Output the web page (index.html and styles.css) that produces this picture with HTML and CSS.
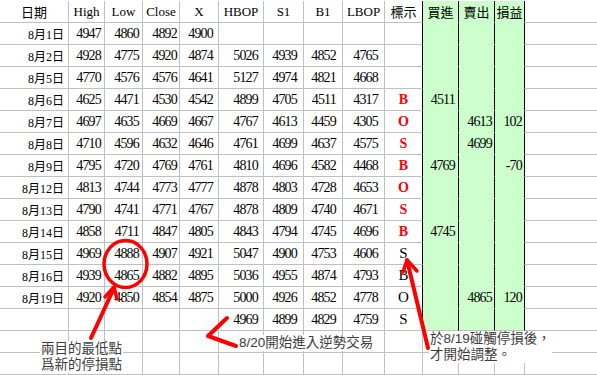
FILE: index.html
```html
<!DOCTYPE html>
<html lang="zh-Hant">
<head>
<meta charset="utf-8">
<title>停損表</title>
<link rel="stylesheet" href="styles.css">
</head>
<body>
<div class="sheet">
  <div class="row head">
    <div class="hd">日期</div><div>High</div><div>Low</div><div>Close</div><div>X</div><div>HBOP</div><div>S1</div><div>B1</div><div>LBOP</div><div class="mk">標示</div><div class="g">買進</div><div class="g">賣出</div><div class="g">損益</div><div></div>
  </div>
  <div class="row">
    <div class="d">8月1日</div><div>4947</div><div>4860</div><div>4892</div><div>4900</div><div></div><div></div><div></div><div></div><div class="mk"></div><div class="g"></div><div class="g"></div><div class="g"></div><div></div>
  </div>
  <div class="row">
    <div class="d">8月2日</div><div>4928</div><div>4775</div><div>4920</div><div>4874</div><div>5026</div><div>4939</div><div>4852</div><div>4765</div><div class="mk"></div><div class="g"></div><div class="g"></div><div class="g"></div><div></div>
  </div>
  <div class="row">
    <div class="d">8月5日</div><div>4770</div><div>4576</div><div>4576</div><div>4641</div><div>5127</div><div>4974</div><div>4821</div><div>4668</div><div class="mk"></div><div class="g"></div><div class="g"></div><div class="g"></div><div></div>
  </div>
  <div class="row">
    <div class="d">8月6日</div><div>4625</div><div>4471</div><div>4530</div><div>4542</div><div>4899</div><div>4705</div><div>4511</div><div>4317</div><div class="mk red">B</div><div class="g">4511</div><div class="g"></div><div class="g"></div><div></div>
  </div>
  <div class="row">
    <div class="d">8月7日</div><div>4697</div><div>4635</div><div>4669</div><div>4667</div><div>4767</div><div>4613</div><div>4459</div><div>4305</div><div class="mk red">O</div><div class="g"></div><div class="g">4613</div><div class="g">102</div><div></div>
  </div>
  <div class="row">
    <div class="d">8月8日</div><div>4710</div><div>4596</div><div>4632</div><div>4646</div><div>4761</div><div>4699</div><div>4637</div><div>4575</div><div class="mk red">S</div><div class="g"></div><div class="g">4699</div><div class="g"></div><div></div>
  </div>
  <div class="row">
    <div class="d">8月9日</div><div>4795</div><div>4720</div><div>4769</div><div>4761</div><div>4810</div><div>4696</div><div>4582</div><div>4468</div><div class="mk red">B</div><div class="g">4769</div><div class="g"></div><div class="g">-70</div><div></div>
  </div>
  <div class="row">
    <div class="d">8月12日</div><div>4813</div><div>4744</div><div>4773</div><div>4777</div><div>4878</div><div>4803</div><div>4728</div><div>4653</div><div class="mk red">O</div><div class="g"></div><div class="g"></div><div class="g"></div><div></div>
  </div>
  <div class="row">
    <div class="d">8月13日</div><div>4790</div><div>4741</div><div>4771</div><div>4767</div><div>4878</div><div>4809</div><div>4740</div><div>4671</div><div class="mk red">S</div><div class="g"></div><div class="g"></div><div class="g"></div><div></div>
  </div>
  <div class="row">
    <div class="d">8月14日</div><div>4858</div><div>4711</div><div>4847</div><div>4805</div><div>4843</div><div>4794</div><div>4745</div><div>4696</div><div class="mk red">B</div><div class="g">4745</div><div class="g"></div><div class="g"></div><div></div>
  </div>
  <div class="row">
    <div class="d">8月15日</div><div>4969</div><div>4888</div><div>4907</div><div>4921</div><div>5047</div><div>4900</div><div>4753</div><div>4606</div><div class="mk">S</div><div class="g"></div><div class="g"></div><div class="g"></div><div></div>
  </div>
  <div class="row">
    <div class="d">8月16日</div><div>4939</div><div>4865</div><div>4882</div><div>4895</div><div>5036</div><div>4955</div><div>4874</div><div>4793</div><div class="mk">B</div><div class="g"></div><div class="g"></div><div class="g"></div><div></div>
  </div>
  <div class="row">
    <div class="d">8月19日</div><div>4920</div><div>4850</div><div>4854</div><div>4875</div><div>5000</div><div>4926</div><div>4852</div><div>4778</div><div class="mk">O</div><div class="g"></div><div class="g">4865</div><div class="g">120</div><div></div>
  </div>
  <div class="row">
    <div class="d"></div><div></div><div></div><div></div><div></div><div>4969</div><div>4899</div><div>4829</div><div>4759</div><div class="mk">S</div><div class="g last"></div><div class="g last"></div><div class="g last"></div><div></div>
  </div>
  <div class="row">
    <div></div><div></div><div></div><div></div><div></div><div></div><div></div><div></div><div></div><div></div><div></div><div></div><div></div><div></div>
  </div>
  <div class="row">
    <div></div><div></div><div></div><div></div><div></div><div></div><div></div><div></div><div></div><div></div><div></div><div></div><div></div><div></div>
  </div>

  <div class="note note-left">兩目的最低點<br>爲新的停損點</div>
  <div class="note note-mid">8/20開始進入逆勢交易</div>
  <div class="note note-right">於8/19碰觸停損後，<br>才開始調整。</div>

  <svg class="marks" width="597" height="375" viewBox="0 0 597 375">
    <g fill="none" stroke="#ff0000" stroke-linecap="round" stroke-linejoin="round">
      <ellipse cx="125.5" cy="264" rx="21.5" ry="23.5" stroke-width="3.5"/>
      <path d="M91 338 L114 288" stroke-width="4"/>
      <path d="M105 297 L114 287 L117 299" stroke-width="3.5"/>
      <path d="M227 318 L208 336 L236 346" stroke-width="4"/>
      <path d="M428 348 L407 260" stroke-width="4"/>
      <path d="M403 272 L407 260 L417 271" stroke-width="3.5"/>
    </g>
  </svg>
</div>
</body>
</html>
```

FILE: styles.css
```css
html, body {
  margin: 0;
  padding: 0;
  background: #ffffff;
}

.sheet {
  position: relative;
  width: 597px;
  height: 375px;
  padding-top: 1px;
  box-sizing: border-box;
  overflow: hidden;
  font-family: "Liberation Serif", "Noto Sans CJK TC", serif;
  color: #000000;
}

.row {
  display: grid;
  grid-template-columns: 69px 36px 38px 37px 39px 45px 40px 39px 42px 38px 36px 36px 30px 1fr;
  height: 22px;
}

.row > div {
  box-sizing: border-box;
  height: 22px;
  border-right: 1px solid #c0c0c0;
  border-bottom: 1px solid #c0c0c0;
  display: flex;
  align-items: center;
  justify-content: flex-end;
  font-size: 14px;
  letter-spacing: -0.8px;
  white-space: nowrap;
  padding-right: 3px;
}

.row > div:last-child {
  border-right: none;
}

/* per column right padding */
.row > div:nth-child(1) { padding-right: 4px; }
.row > div:nth-child(2) { padding-right: 3px; }
.row > div:nth-child(3) { padding-right: 3px; }
.row > div:nth-child(4) { padding-right: 2px; }
.row > div:nth-child(5) { padding-right: 5px; }
.row > div:nth-child(6) { padding-right: 5px; }
.row > div:nth-child(7),
.row > div:nth-child(8),
.row > div:nth-child(9) { padding-right: 6px; }
.row > div:nth-child(11) { padding-right: 3px; }
.row > div:nth-child(12),
.row > div:nth-child(13) { padding-right: 2px; }

.row > div.d {
  font-size: 12px;
  letter-spacing: 0;
}

.row.head > div {
  justify-content: center;
  padding: 0;
  letter-spacing: 0;
  font-size: 13px;
}

.row.head > div.hd {
  padding: 0;
}

.row > div.mk {
  justify-content: center;
  padding: 0;
  letter-spacing: 0;
  font-size: 15px;
  border-right-color: #000000;
}

.row.head > div.mk {
  font-size: 13px;
}

.row > div.red {
  color: #ff0000;
  font-weight: bold;
  font-size: 14px;
}

.row > div.g {
  background: #ccffcc;
  border-right-color: #000000;
  border-bottom-color: transparent;
}

.row > div.g.last {
  border-bottom-color: #c0c0c0;
}

.note {
  position: absolute;
  background: #ffffff;
  color: #3c3c3c;
  font-family: "Liberation Sans", "Noto Sans CJK TC", sans-serif;
  font-size: 13.5px;
  line-height: 16px;
  white-space: nowrap;
  padding: 0 1px;
}

.note-left {
  left: 40px;
  top: 341px;
}

.note-mid {
  left: 238px;
  top: 335px;
}

.note-right {
  left: 429px;
  top: 331px;
}

.marks {
  position: absolute;
  left: 0;
  top: 0;
  pointer-events: none;
}
```
